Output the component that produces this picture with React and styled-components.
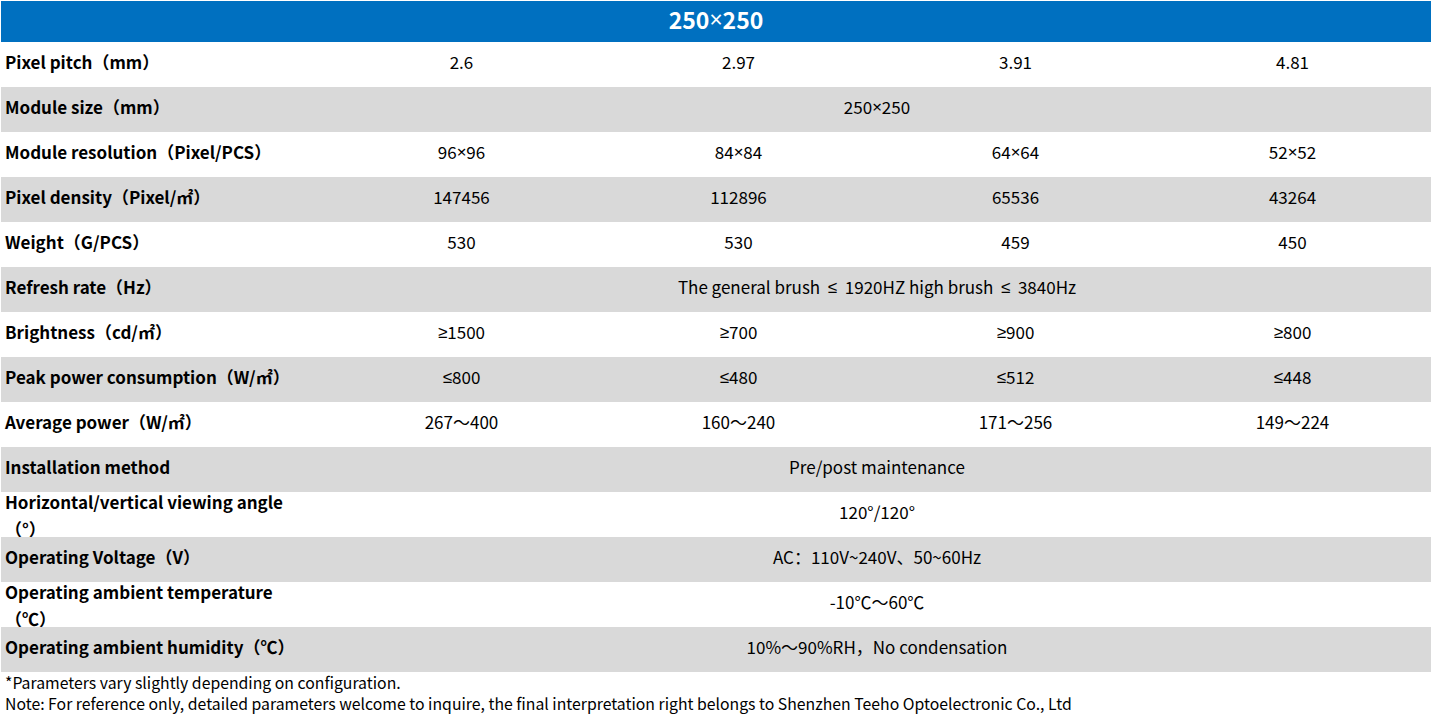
import React from 'react';
import styled, { createGlobalStyle } from 'styled-components';

const GlobalStyle = createGlobalStyle`
  html, body {
    margin: 0;
    padding: 0;
    background: #fff;
  }
  body {
    padding: 1px 0 0 1px;
    font-family: "Noto Sans CJK SC", "Noto Sans", sans-serif;
    color: #000;
  }
`;

const rows = [
  { label: 'Pixel pitch（mm）', values: ['2.6', '2.97', '3.91', '4.81'] },
  { label: 'Module size（mm）', span: '250×250' },
  {
    label: 'Module resolution（Pixel/PCS）',
    values: ['96×96', '84×84', '64×64', '52×52'],
  },
  {
    label: 'Pixel density（Pixel/㎡）',
    values: ['147456', '112896', '65536', '43264'],
  },
  { label: 'Weight（G/PCS）', values: ['530', '530', '459', '450'] },
  {
    label: 'Refresh rate（Hz）',
    span: 'The general brush  ≤  1920HZ high brush  ≤  3840Hz',
  },
  { label: 'Brightness（cd/㎡）', values: ['≥1500', '≥700', '≥900', '≥800'] },
  {
    label: 'Peak power consumption（W/㎡）',
    values: ['≤800', '≤480', '≤512', '≤448'],
  },
  {
    label: 'Average power（W/㎡）',
    values: ['267～400', '160～240', '171～256', '149～224'],
  },
  { label: 'Installation method', span: 'Pre/post maintenance' },
  {
    label: 'Horizontal/vertical viewing angle （°）',
    span: '120°/120°',
    multi: true,
  },
  { label: 'Operating Voltage（V）', span: 'AC：110V~240V、50~60Hz' },
  {
    label: 'Operating ambient temperature （℃）',
    span: '-10℃～60℃',
    multi: true,
  },
  {
    label: 'Operating ambient humidity（℃）',
    span: '10%～90%RH，No condensation',
  },
];

// latin-style math signs, like the reference
const withSymbols = (text) =>
  text.split(/([≤≥×])/).map((part, i) =>
    /[≤≥×]/.test(part) ? <Sym key={i}>{part}</Sym> : part
  );

export default function App() {
  return (
    <>
      <GlobalStyle />
      <Table>
        <Header>{withSymbols('250×250')}</Header>
        {rows.map((row, i) => (
          <Row key={row.label} $shade={i % 2 === 1}>
            <Label $multi={row.multi}>{row.label}</Label>
            {row.span ? (
              <Value $span>{withSymbols(row.span)}</Value>
            ) : (
              row.values.map((v, j) => <Value key={j}>{withSymbols(v)}</Value>)
            )}
          </Row>
        ))}
      </Table>
      <Notes>
        <div>*Parameters vary slightly depending on configuration.</div>
        <div>
          Note: For reference only, detailed parameters welcome to inquire, the
          final interpretation right belongs to Shenzhen Teeho Optoelectronic
          Co., Ltd
        </div>
      </Notes>
    </>
  );
}

const Table = styled.div`
  width: 1430px;
  display: grid;
  grid-template-columns: 322px repeat(4, 277px);
`;

const Header = styled.div`
  grid-column: 1 / -1;
  height: 41px;
  box-sizing: border-box;
  padding-bottom: 6px;
  background: #0070c0;
  color: #fff;
  font-weight: 700;
  font-size: 23px;
  display: flex;
  align-items: center;
  justify-content: center;
`;

const Row = styled.div`
  grid-column: 1 / -1;
  display: grid;
  grid-template-columns: subgrid;
  grid-template-rows: 45px;
  height: 45px;
  background: ${(p) => (p.$shade ? '#d9d9d9' : '#fff')};
`;

const Label = styled.div`
  display: flex;
  align-items: center;
  min-height: 0;
  padding: ${(p) => (p.$multi ? '0 30px 0 4px' : '0 30px 6px 4px')};
  font-weight: 700;
  font-size: 17px;
  line-height: ${(p) => (p.$multi ? '27px' : '26px')};
`;

const Value = styled.div`
  grid-column: ${(p) => (p.$span ? '2 / -1' : 'auto')};
  display: flex;
  align-items: center;
  justify-content: center;
  white-space: pre;
  padding-bottom: 6px;
  font-size: 17px;
`;

const Sym = styled.span`
  font-family: "Noto Sans", sans-serif;
  font-weight: 400;
`;

const Notes = styled.div`
  padding: 0 0 0 4px;
  font-size: 15.8px;
  line-height: 21px;
`;
